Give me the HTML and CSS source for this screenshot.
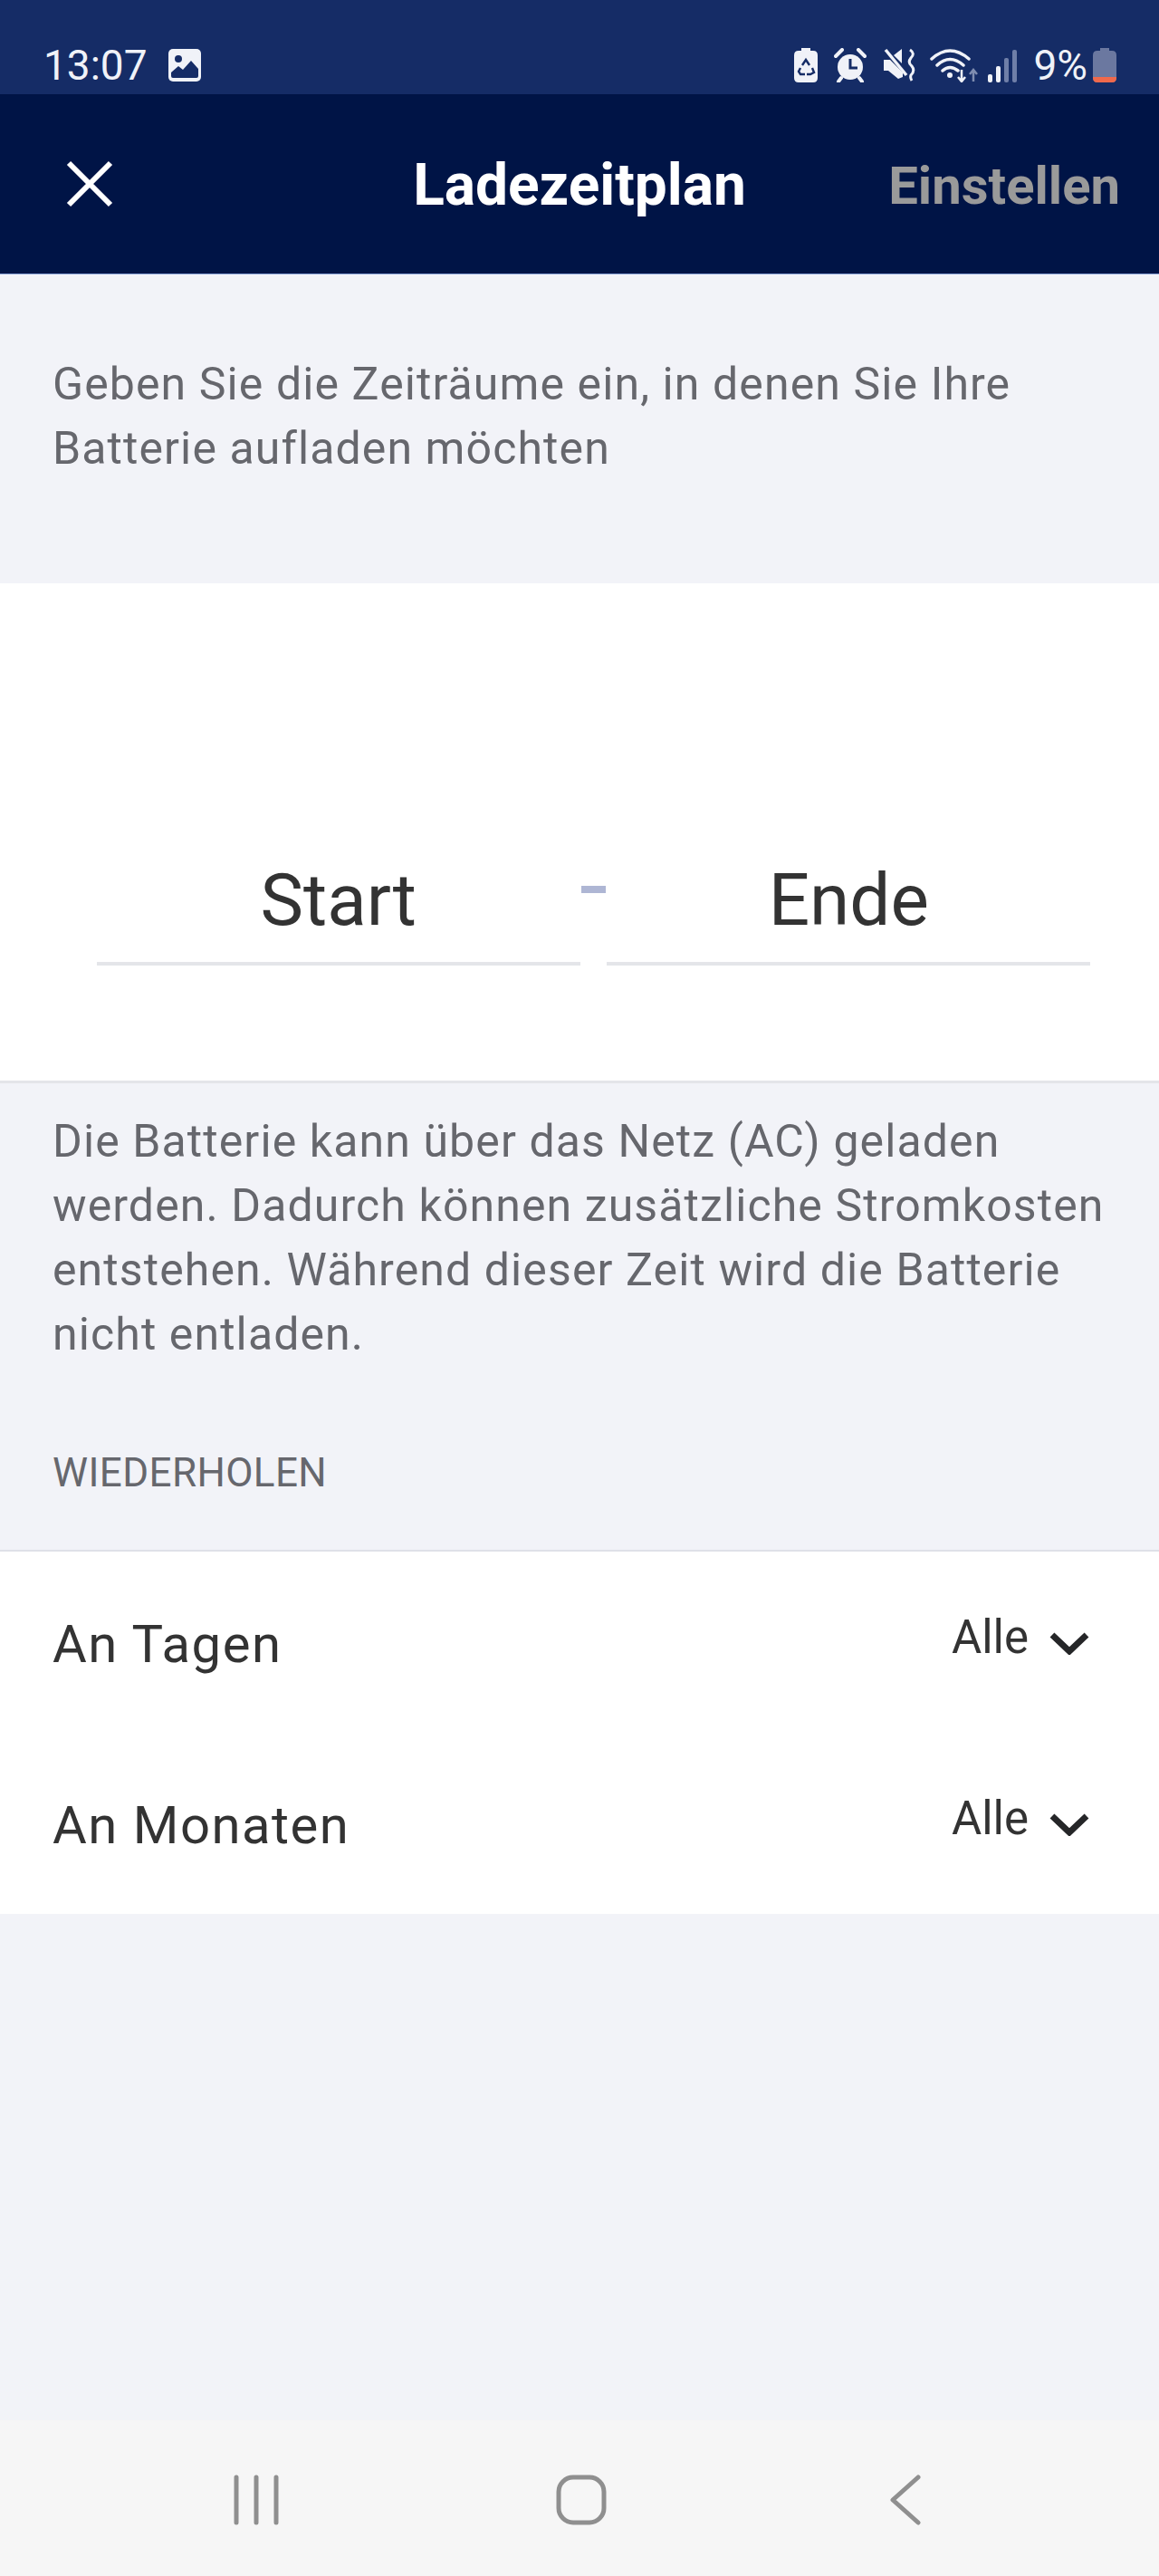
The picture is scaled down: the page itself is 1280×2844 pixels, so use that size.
FILE: index.html
```html
<!DOCTYPE html>
<html lang="de">
<head>
    <meta charset="UTF-8">
    <title>Ladezeitplan</title>
    <link rel="stylesheet" href="styles.css">
</head>
<body>
    <div class="phone">
        <div class="status-bar">
            <div class="status-left">
                <span class="clock">13:07</span>
                <svg class="st-icon" width="38" height="38" viewBox="0 0 38 38"><rect x="1" y="1" width="36" height="36" rx="5" fill="#f0f2f8"/><circle cx="12" cy="12" r="4" fill="#152c66"/><path d="M4 31V27L12 20L17 24L26 14L34 23V31Q34 33 32 33H6Q4 33 4 31Z" fill="#152c66"/></svg>
            </div>
            <div class="status-right">
                <svg class="st-icon" width="26" height="38" viewBox="0 0 26 38"><path d="M8 0H18V3H21Q26 3 26 8V33Q26 38 21 38H5Q0 38 0 33V8Q0 3 5 3H8Z" fill="#f0f2f8"/><path d="M9 19L13 13L17 19M20 22L22 27L18 29H14M12 29H7L5 26L7 22" fill="none" stroke="#152c66" stroke-width="2.4"/></svg>
                <svg class="st-icon" width="36" height="38" viewBox="0 0 36 38"><circle cx="18" cy="21" r="14" fill="#f0f2f8"/><path d="M18 12V22H26" fill="none" stroke="#152c66" stroke-width="3"/><path d="M2 9L9 2M27 2L34 9M8 33L5 37M28 33L31 37" stroke="#f0f2f8" stroke-width="4" stroke-linecap="round"/></svg>
                <svg class="st-icon" width="36" height="38" viewBox="0 0 36 38"><path d="M1 13H8L22 27V32L17 34L6 25H1Z" fill="#f0f2f8"/><path d="M12 8L21 1V17Z" fill="#f0f2f8"/><path d="M3 2L26 30" stroke="#f0f2f8" stroke-width="3.5"/><path d="M30 2Q36 6 31 11Q27 16 32 20Q36 25 31 30Q30 33 32 36" fill="none" stroke="#f0f2f8" stroke-width="3"/></svg>
                <svg class="st-icon st-wifi" width="54" height="38" viewBox="0 0 54 38"><path d="M2 12Q22 -6 43 12M8 19Q22 6 37 19M14 25Q22 18 31 25" fill="none" stroke="#f0f2f8" stroke-width="3.5" stroke-linecap="round"/><circle cx="22" cy="30" r="3" fill="#f0f2f8"/><path d="M35 24V36M31 32L35 37L39 32" fill="none" stroke="#f0f2f8" stroke-width="2.5"/><path d="M48 37V25M44 29L48 24L52 29" fill="none" stroke="#7f8db0" stroke-width="2.5"/></svg>
                <svg class="st-icon st-signal" width="32" height="38" viewBox="0 0 32 38"><rect x="0" y="29" width="5" height="9" rx="2" fill="#f0f2f8"/><rect x="9" y="20" width="5" height="18" rx="2" fill="#f0f2f8"/><rect x="18" y="11" width="5" height="27" rx="2" fill="#6f7fa8"/><rect x="27" y="2" width="5" height="36" rx="2" fill="#6f7fa8"/></svg>
                <span class="battery-text">9%</span>
                <svg class="st-icon st-battery" width="26" height="38" viewBox="0 0 26 38"><path d="M8 0H18V3H21Q26 3 26 8V33Q26 38 21 38H5Q0 38 0 33V8Q0 3 5 3H8Z" fill="#6b78a0"/><path d="M0 32H26V33Q26 38 21 38H5Q0 38 0 33Z" fill="#f0694c"/></svg>
            </div>
        </div>

        <header class="app-header">
            <svg class="close-icon" width="54" height="54" viewBox="0 0 54 54"><path d="M4 4L50 50M50 4L4 50" stroke="#fff" stroke-width="6"/></svg>
            <h1 class="title">Ladezeitplan</h1>
            <span class="action">Einstellen</span>
        </header>

        <section class="intro">
            <p class="body-text">Geben Sie die Zeiträume ein, in denen Sie Ihre<br>Batterie aufladen möchten</p>
        </section>

        <section class="time-range">
            <div class="time-field">Start</div>
            <div class="time-dash"></div>
            <div class="time-field">Ende</div>
        </section>

        <section class="note">
            <p class="body-text">Die Batterie kann über das Netz (AC) geladen<br>werden. Dadurch können zusätzliche Stromkosten<br>entstehen. Während dieser Zeit wird die Batterie<br>nicht entladen.</p>
            <h2 class="section-label">WIEDERHOLEN</h2>
        </section>

        <section class="repeat-list">
            <div class="repeat-row">
                <span class="repeat-name">An Tagen</span>
                <span class="repeat-value">Alle
                    <svg class="chevron" width="44" height="26" viewBox="0 0 44 26"><path d="M3 4L22 22L41 4" fill="none" stroke="#252628" stroke-width="7"/></svg>
                </span>
            </div>
            <div class="repeat-row">
                <span class="repeat-name">An Monaten</span>
                <span class="repeat-value">Alle
                    <svg class="chevron" width="44" height="26" viewBox="0 0 44 26"><path d="M3 4L22 22L41 4" fill="none" stroke="#252628" stroke-width="7"/></svg>
                </span>
            </div>
        </section>

        <div class="spacer"></div>

        <nav class="nav-bar">
            <svg width="56" height="56" viewBox="0 0 56 56"><path d="M6 3V53M28 3V53M50 3V53" stroke="#8f8f8f" stroke-width="5" stroke-linecap="round"/></svg>
            <svg width="56" height="56" viewBox="0 0 56 56"><rect x="3" y="3" width="50" height="50" rx="16" fill="none" stroke="#8f8f8f" stroke-width="5"/></svg>
            <svg width="56" height="56" viewBox="0 0 56 56"><path d="M42 3L14 28L42 53" fill="none" stroke="#8f8f8f" stroke-width="5" stroke-linecap="round" stroke-linejoin="round"/></svg>
        </nav>
    </div>
</body>
</html>
```

FILE: styles.css
```css
html, body {
    margin: 0;
    padding: 0;
}
body {
    font-family: Roboto, "Noto Sans", sans-serif;
    background-color: #f2f3f8;
}
.phone {
    width: 1280px;
    height: 2844px;
    display: flex;
    flex-direction: column;
}
.status-bar {
    height: 104px;
    box-sizing: border-box;
    background-color: #152c66;
    padding: 52px 47px 0 48px;
    display: flex;
    justify-content: space-between;
    align-items: flex-start;
    color: #f0f2f8;
}
.status-left, .status-right {
    display: flex;
    align-items: center;
    height: 40px;
}
.status-left {
    gap: 22px;
}
.status-right {
    gap: 18px;
}
.st-wifi {
    margin-left: -2px;
}
.st-signal {
    margin-left: -8px;
}
.st-battery {
    margin-left: -12px;
}
.clock {
    font-size: 46px;
}
.battery-text {
    font-size: 46px;
}
.app-header {
    height: 199px;
    flex: none;
    background-color: #001446;
    border-bottom: 1px solid #8ea4d8;
    box-sizing: border-box;
    display: grid;
    grid-template-columns: minmax(0, 1fr) auto minmax(0, 1fr);
    align-items: center;
    padding: 3px 43px 0;
}
.close-icon {
    margin: -3px 0 0 29px;
}
.title {
    margin: 0;
    color: #fff;
    font-size: 64px;
    font-weight: 700;
}
.action {
    justify-self: end;
    color: #9a9a9a;
    font-size: 58px;
    font-weight: 700;
}
.intro {
    height: 341px;
    flex: none;
    box-sizing: border-box;
    padding: 86px 58px 0;
}
.body-text {
    margin: 0;
    font-size: 50px;
    line-height: 71px;
    letter-spacing: 1.1px;
    color: #66676d;
}
.time-range {
    height: 552px;
    flex: none;
    box-sizing: border-box;
    background-color: #fff;
    border-bottom: 3px solid #e4e5e9;
    padding: 300px 76px 0 107px;
    display: flex;
    align-items: flex-start;
}
.time-field {
    width: 534px;
    height: 122px;
    box-sizing: border-box;
    border-bottom: 4px solid #e4e5e9;
    text-align: center;
    font-size: 80px;
    line-height: 100px;
    color: #333;
}
.time-dash {
    width: 28px;
    height: 8px;
    margin: 34px 1px 0 1px;
    background-color: #aeb6d4;
}
.note {
    height: 517px;
    flex: none;
    box-sizing: border-box;
    padding: 29px 58px 0;
    border-bottom: 2px solid #dfe1e8;
}
.section-label {
    margin: 92px 0 0;
    font-size: 44px;
    font-weight: 400;
    line-height: 50px;
    letter-spacing: 0.4px;
    color: #66676d;
}
.repeat-list {
    height: 400px;
    flex: none;
    background-color: #fff;
}
.repeat-row {
    height: 200px;
    box-sizing: border-box;
    padding: 0 77px 0 58px;
    display: flex;
    justify-content: space-between;
    align-items: flex-start;
}
.repeat-name {
    margin-top: 70px;
    font-size: 58px;
    line-height: 64px;
    letter-spacing: 1.5px;
    color: #333;
}
.repeat-value {
    margin-top: 63px;
    display: flex;
    align-items: center;
    gap: 23px;
    font-size: 51px;
    line-height: 64px;
    color: #333;
}
.chevron {
    margin-top: 11px;
}
.spacer {
    flex: 1;
}
.nav-bar {
    height: 172px;
    flex: none;
    background-color: #f6f6f6;
    display: flex;
    align-items: center;
    box-sizing: border-box;
    padding: 4px 252px 0 255px;
    justify-content: space-between;
}
```
